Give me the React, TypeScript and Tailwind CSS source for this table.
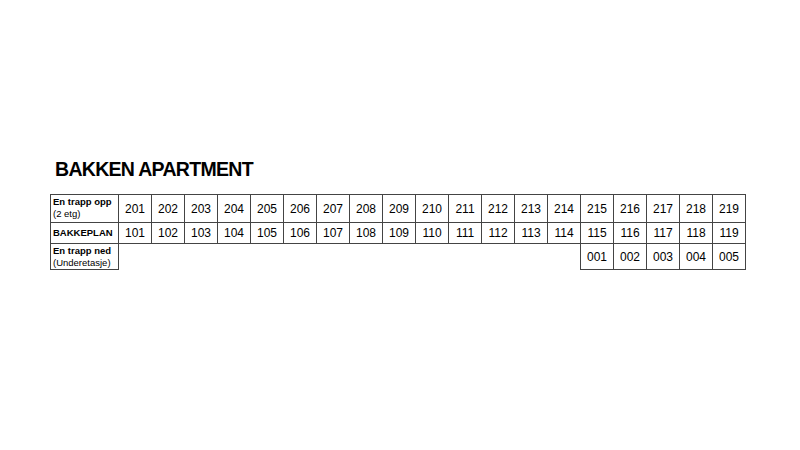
import React from 'react';

const upper = Array.from({ length: 19 }, (_, i) => String(201 + i));
const ground = Array.from({ length: 19 }, (_, i) => String(101 + i));
const basement = ['001', '002', '003', '004', '005'];

const cell = 'border border-[#444] text-center text-[12px] text-black w-[33px] p-0';
const label = 'border border-[#444] text-left w-[68px] pl-[2px] pr-0 py-0 text-[9.5px] leading-[12px] text-black';

const App: React.FC = () => {
  return (
    <div className="w-[800px] h-[450px] bg-white pl-[55px] pt-[159px]" style={{ fontFamily: '"Liberation Sans", Arial, sans-serif' }}>
      <h1 className="text-[19.5px] leading-[20px] font-bold tracking-[-0.7px] text-black">BAKKEN APARTMENT</h1>

      <table className="border-collapse mt-[15px] -ml-[5px] table-fixed">
        <tbody>
          <tr className="h-[28px]">
            <td className={label + ' align-top'}>
              <div className="font-bold pt-[1px]">En trapp opp</div>
              <div>(2 etg)</div>
            </td>
            {upper.map((n) => (
              <td key={n} className={cell}>{n}</td>
            ))}
          </tr>
          <tr className="h-[21px]">
            <td className={label + ' align-middle font-bold'}>BAKKEPLAN</td>
            {ground.map((n) => (
              <td key={n} className={cell}>{n}</td>
            ))}
          </tr>
          <tr className="h-[26px]">
            <td className={label + ' align-top'}>
              <div className="font-bold pt-[1px]">En trapp ned</div>
              <div>(Underetasje)</div>
            </td>
            <td colSpan={14} className="p-0"></td>
            {basement.map((n) => (
              <td key={n} className={cell}>{n}</td>
            ))}
          </tr>
        </tbody>
      </table>
    </div>
  );
};

export default App;
